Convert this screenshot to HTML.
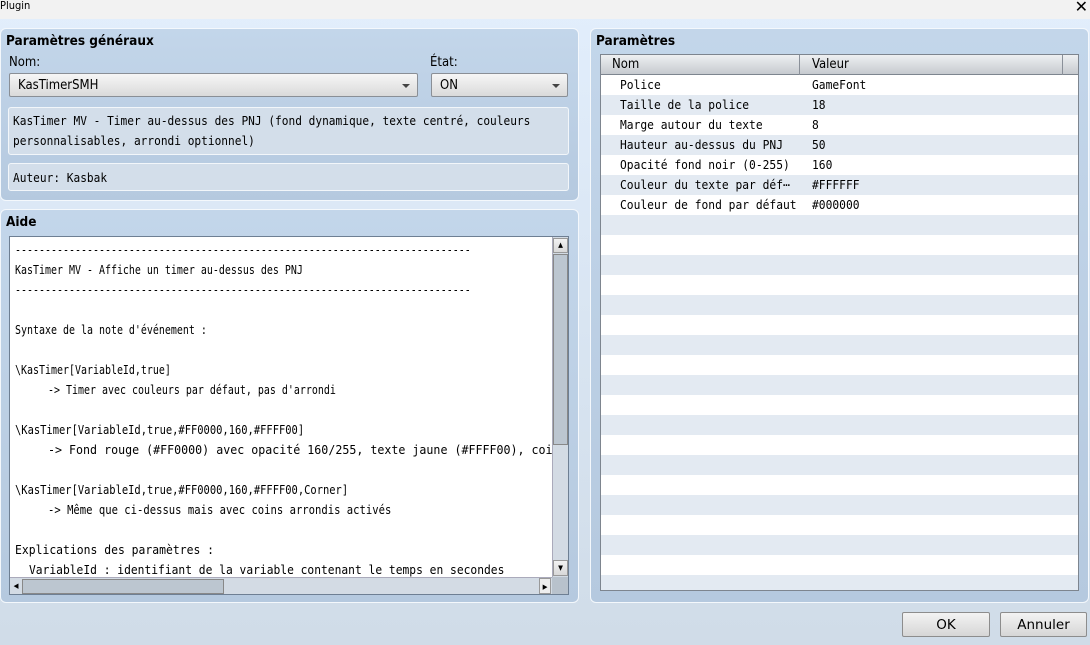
<!DOCTYPE html>
<html><head><meta charset="utf-8"><style>
*{box-sizing:border-box;margin:0;padding:0}
body{width:1090px;height:645px;overflow:hidden;background:linear-gradient(#e2eefc,#d0dce8);font-family:"DejaVu Sans Condensed","Liberation Sans",sans-serif;font-size:12px;color:#000;position:relative}
.abs{position:absolute}
.title{left:0;top:0;width:1090px;height:19px;background:#f2f2f2;font-size:11px;line-height:11px;padding-left:0}
.panel{background:linear-gradient(#c3d6ea,#b5c9df);border:1px solid #f4f8fc;border-radius:6px}
.h{font-weight:bold;font-size:13.5px}
.mono{font-family:"DejaVu Sans Mono","Liberation Mono",monospace}
.combo{background:linear-gradient(#f6f6f6,#dadada);border:1px solid #8a8f96;border-radius:2px;font-size:13px;line-height:23px;padding-left:8px}
.combo:after{content:"";position:absolute;right:7px;top:10px;border-left:4px solid transparent;border-right:4px solid transparent;border-top:4px solid #444}
.box{background:#d3deea;border:1px solid #f2f6fa;border-radius:3px}
.sx{display:inline-block;transform-origin:0 50%;white-space:pre}
.btn{background:linear-gradient(#f3f3f3,#d6d6d6);border:1px solid #8d8d8d;border-radius:2px;text-align:center;font-size:13.5px;line-height:24px;font-family:"DejaVu Sans","Liberation Sans",sans-serif}
.aide div{height:20px;line-height:21px;white-space:pre;font-size:12px;font-family:"DejaVu Sans Mono",monospace;width:700px}
.aide span{display:inline-block;transform:scaleX(.83);transform-origin:0 50%}
.row{height:20px;line-height:21px;font-size:12px;position:relative}
.row:nth-child(even){background:#e3eaf2}
.row span{position:absolute;top:0;transform:scaleX(.94);transform-origin:0 50%;white-space:pre}
</style></head><body>
<div class="abs title">Plugin</div>
<div class="abs" style="right:2px;top:-3px;font-size:16px;font-family:'DejaVu Sans',sans-serif">✕</div>

<div class="abs panel" style="left:0;top:28px;width:579px;height:173px"></div>
<div class="abs h" style="left:6px;top:33px">Paramètres généraux</div>
<div class="abs" style="left:9px;top:55px;font-size:13px">Nom:</div>
<div class="abs" style="left:430px;top:55px;font-size:13px">État:</div>
<div class="abs combo" style="left:9px;top:73px;width:409px;height:24px">KasTimerSMH</div>
<div class="abs combo" style="left:431px;top:73px;width:137px;height:24px">ON</div>
<div class="abs box mono" style="left:8px;top:107px;width:561px;height:48px;font-size:12px;line-height:20px;padding:3px 0 0 4px"><span class="sx" style="transform:scaleX(.93)">KasTimer MV - Timer au-dessus des PNJ (fond dynamique, texte centré, couleurs</span><br><span class="sx" style="transform:scaleX(.93)">personnalisables, arrondi optionnel)</span></div>
<div class="abs box mono" style="left:8px;top:163px;width:561px;height:28px;font-size:12px;line-height:28px;padding-left:4px"><span class="sx" style="transform:scaleX(.93)">Auteur: Kasbak</span></div>

<div class="abs panel" style="left:0;top:209px;width:579px;height:394px"></div>
<div class="abs h" style="left:6px;top:214px">Aide</div>
<div class="abs" style="left:9px;top:236px;width:560px;height:359px;background:#fff;border:1px solid #6e7f93;overflow:hidden">
 <div class="aide" style="position:absolute;left:5px;top:3px">
<div><span>----------------------------------------------------------------------------</span></div>
<div><span>KasTimer MV - Affiche un timer au-dessus des PNJ</span></div>
<div><span>----------------------------------------------------------------------------</span></div>
<div> </div>
<div><span>Syntaxe de la note d'événement :</span></div>
<div> </div>
<div><span>\KasTimer[VariableId,true]</span></div>
<div>     <span style="margin-left:-3px">-&gt; Timer avec couleurs par défaut, pas d'arrondi</span></div>
<div> </div>
<div><span style="transform:scaleX(.87)">\KasTimer[VariableId,true,#FF0000,160,#FFFF00]</span></div>
<div>     <span style="margin-left:-3px;transform:scaleX(.97)">-&gt; Fond rouge (#FF0000) avec opacité 160/255, texte jaune (#FFFF00), coins</span></div>
<div> </div>
<div><span style="transform:scaleX(.87)">\KasTimer[VariableId,true,#FF0000,160,#FFFF00,Corner]</span></div>
<div>     <span style="margin-left:-3px;transform:scaleX(.88)">-&gt; Même que ci-dessus mais avec coins arrondis activés</span></div>
<div> </div>
<div><span style="transform:scaleX(.95)">Explications des paramètres :</span></div>
<div>  <span style="transform:scaleX(.94)">VariableId : identifiant de la variable contenant le temps en secondes</span></div>
 </div>
 <div class="abs" style="left:542px;top:0;width:17px;height:340px;background:#d3dbe4;border-left:1px solid #aab"></div>
 <div class="abs" style="left:543px;top:1px;width:15px;height:15px;background:linear-gradient(#f2f2f2,#d8d8d8);border:1px solid #999;font-size:7px;text-align:center;line-height:13px">▲</div>
 <div class="abs" style="left:543px;top:17px;width:15px;height:191px;background:#bcc6d0;border:1px solid #888"></div>
 <div class="abs" style="left:543px;top:323px;width:15px;height:16px;background:linear-gradient(#f2f2f2,#d8d8d8);border:1px solid #999;font-size:7px;text-align:center;line-height:14px">▼</div>
 <div class="abs" style="left:0;top:340px;width:542px;height:18px;background:#d3dbe4;border-top:1px solid #aab"></div>
 <div class="abs" style="left:1px;top:341px;width:10px;height:16px;font-size:7px;line-height:16px;text-align:center">◀</div>
 <div class="abs" style="left:12px;top:342px;width:202px;height:15px;background:#bcc6d0;border:1px solid #888"></div>
 <div class="abs" style="left:529px;top:341px;width:12px;height:16px;font-size:7px;line-height:16px;text-align:center;background:#eee;border:1px solid #999">▶</div>
 <div class="abs" style="left:542px;top:340px;width:17px;height:18px;background:#b8c2cc"></div>
</div>

<div class="abs panel" style="left:590px;top:28px;width:499px;height:575px"></div>
<div class="abs h" style="left:596px;top:33px">Paramètres</div>
<div class="abs" style="left:600px;top:54px;width:479px;height:537px;background:#fff;border:1px solid #7d858f;overflow:hidden">
 <div style="height:20px;background:linear-gradient(#eef0f2,#c6cacf);border-bottom:1px solid #7d858f;position:relative;font-size:13px;line-height:20px">
  <span class="abs" style="left:11px">Nom</span>
  <span class="abs" style="left:211px">Valeur</span>
  <div class="abs" style="left:198px;top:0;width:1px;height:20px;background:#8a9099"></div>
  <div class="abs" style="left:461px;top:0;width:1px;height:20px;background:#8a9099"></div>
 </div>
 <div class="mono">
  <div class="row"><span style="left:19px">Police</span><span style="left:211px">GameFont</span></div>
  <div class="row"><span style="left:19px">Taille de la police</span><span style="left:211px">18</span></div>
  <div class="row"><span style="left:19px">Marge autour du texte</span><span style="left:211px">8</span></div>
  <div class="row"><span style="left:19px">Hauteur au-dessus du PNJ</span><span style="left:211px">50</span></div>
  <div class="row"><span style="left:19px">Opacité fond noir (0-255)</span><span style="left:211px">160</span></div>
  <div class="row"><span style="left:19px">Couleur du texte par déf⋯</span><span style="left:211px">#FFFFFF</span></div>
  <div class="row"><span style="left:19px">Couleur de fond par défaut</span><span style="left:211px">#000000</span></div>
  <div class="row"></div><div class="row"></div><div class="row"></div><div class="row"></div><div class="row"></div><div class="row"></div><div class="row"></div><div class="row"></div><div class="row"></div><div class="row"></div><div class="row"></div><div class="row"></div><div class="row"></div><div class="row"></div><div class="row"></div><div class="row"></div><div class="row"></div><div class="row"></div><div class="row"></div>
 </div>
</div>

<div class="abs btn" style="left:902px;top:612px;width:88px;height:25px">OK</div>
<div class="abs btn" style="left:1000px;top:612px;width:87px;height:25px">Annuler</div>
</body></html>
